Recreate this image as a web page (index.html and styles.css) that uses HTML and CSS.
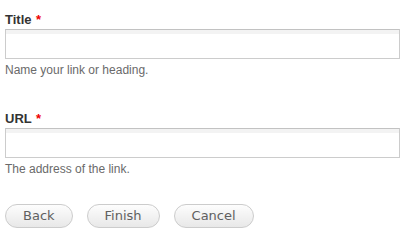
FILE: index.html
```html
<!DOCTYPE html>
<html>
<head>
<meta charset="utf-8">
<link rel="stylesheet" href="styles.css">
</head>
<body>
<form class="form">
  <div class="field">
    <label class="label" for="title">Title <span class="req">*</span></label>
    <input class="text" id="title" type="text">
    <div class="desc">Name your link or heading.</div>
  </div>
  <div class="field">
    <label class="label" for="url">URL <span class="req">*</span></label>
    <input class="text" id="url" type="text">
    <div class="desc">The address of the link.</div>
  </div>
  <div class="actions">
    <button type="button" class="btn">Back</button>
    <button type="button" class="btn">Finish</button>
    <button type="button" class="btn">Cancel</button>
  </div>
</form>
</body>
</html>
```
FILE: styles.css
```css
html, body {
  margin: 0;
  padding: 0;
  background: #fff;
}
.form {
  padding: 12px 0 0 5px;
  font-family: "Liberation Sans", Arial, sans-serif;
}
.field {
  margin-bottom: 33px;
}
.label {
  display: block;
  font-size: 13px;
  line-height: 16px;
  font-weight: bold;
  color: #333;
  margin-bottom: 1px;
}
.req {
  color: #e00;
  margin-left: 1px;
}
.text {
  display: block;
  box-sizing: border-box;
  width: 395px;
  height: 30px;
  margin: 0;
  padding: 4px 6px;
  border: 1px solid #ccc;
  border-top-color: #c2c2c2;
  border-radius: 0;
  background: linear-gradient(#f3f3f3 0, #f3f3f3 4px, #fff 4px);
  outline: none;
}
.desc {
  margin-top: 3px;
  font-size: 12px;
  line-height: 16px;
  color: #6a6a6a;
}
.actions {
  display: flex;
  gap: 14px;
  margin-top: -6px;
}
.btn {
  box-sizing: border-box;
  height: 24px;
  padding: 0 17px;
  border: 1px solid #ccc;
  border-radius: 12px;
  background: linear-gradient(#fdfdfd, #e8e8e8);
  font-family: "DejaVu Sans", Verdana, sans-serif;
  font-size: 13px;
  line-height: 20px;
  color: #606060;
  cursor: pointer;
}
```
